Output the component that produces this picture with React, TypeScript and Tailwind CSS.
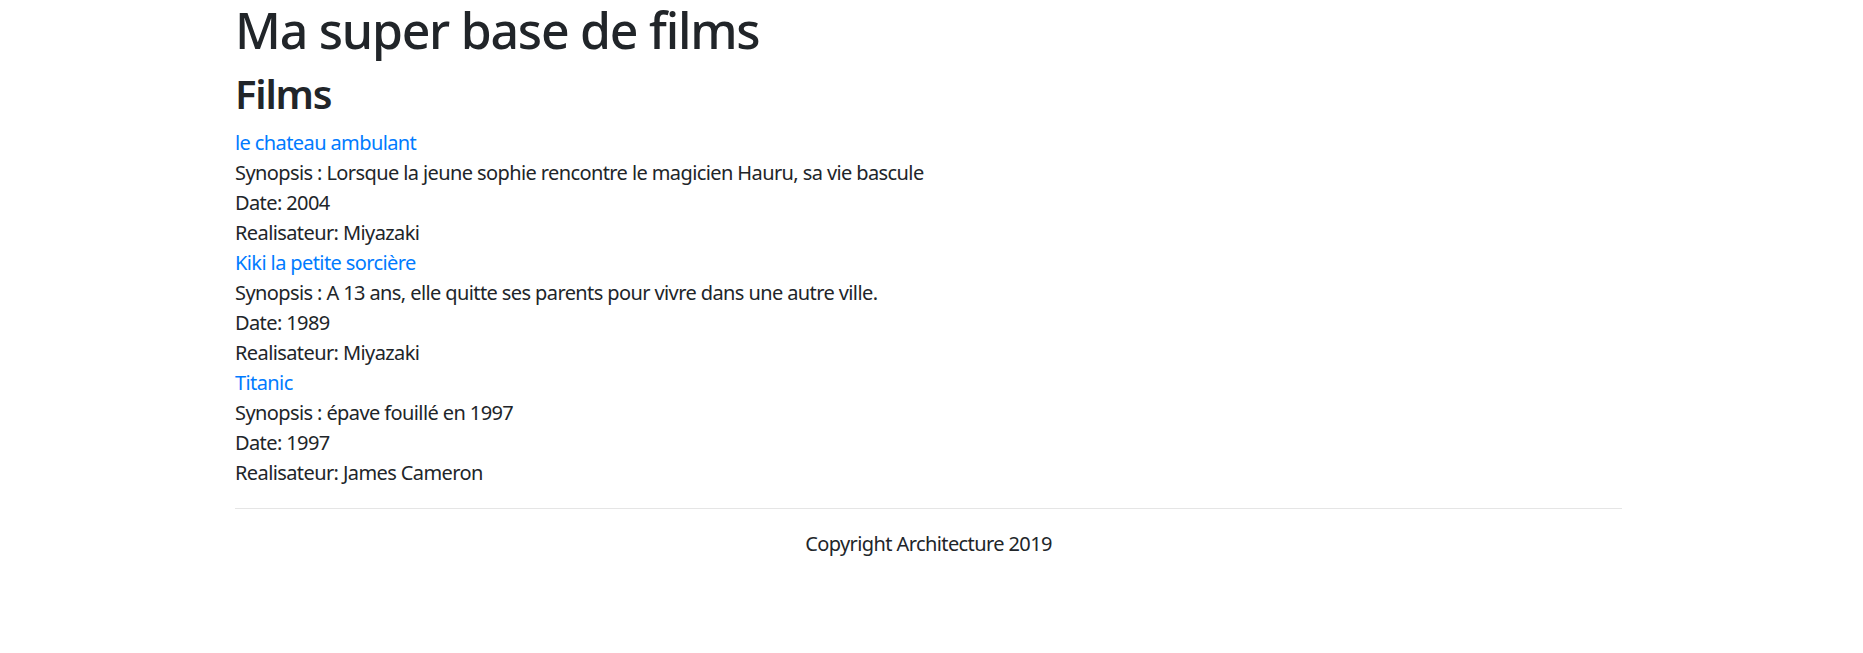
const films = [
  {
    titre: "le chateau ambulant",
    synopsis: "Lorsque la jeune sophie rencontre le magicien Hauru, sa vie bascule",
    date: "2004",
    realisateur: "Miyazaki",
  },
  {
    titre: "Kiki la petite sorcière",
    synopsis: "A 13 ans, elle quitte ses parents pour vivre dans une autre ville.",
    date: "1989",
    realisateur: "Miyazaki",
  },
  {
    titre: "Titanic",
    synopsis: "épave fouillé en 1997",
    date: "1997",
    realisateur: "James Cameron",
  },
];

export default function App() {
  return (
    <div className="min-h-screen bg-white text-[#212529] font-['Noto_Sans',sans-serif] text-[20px] leading-[30px] tracking-[-0.03em]">
      <div className="ml-[235px] w-[1387px]">
        <h1 className="text-[50px] leading-[60px] font-medium mb-[10px] tracking-[-0.025em]">Ma super base de films</h1>
        <h2 className="text-[40px] leading-[48px] font-semibold mb-[10px] tracking-[-0.03em]">Films</h2>
        <div>
          {films.map((film) => (
            <div key={film.titre}>
              <a href="#" className="block text-[#007bff] hover:underline">
                {film.titre}
              </a>
              <div>Synopsis : {film.synopsis}</div>
              <div>Date: {film.date}</div>
              <div>Realisateur: {film.realisateur}</div>
            </div>
          ))}
        </div>
        <hr className="mt-[20px] mb-[20px] border-0 border-t border-black/10" />
        <footer className="text-center">Copyright Architecture 2019</footer>
      </div>
    </div>
  );
}
